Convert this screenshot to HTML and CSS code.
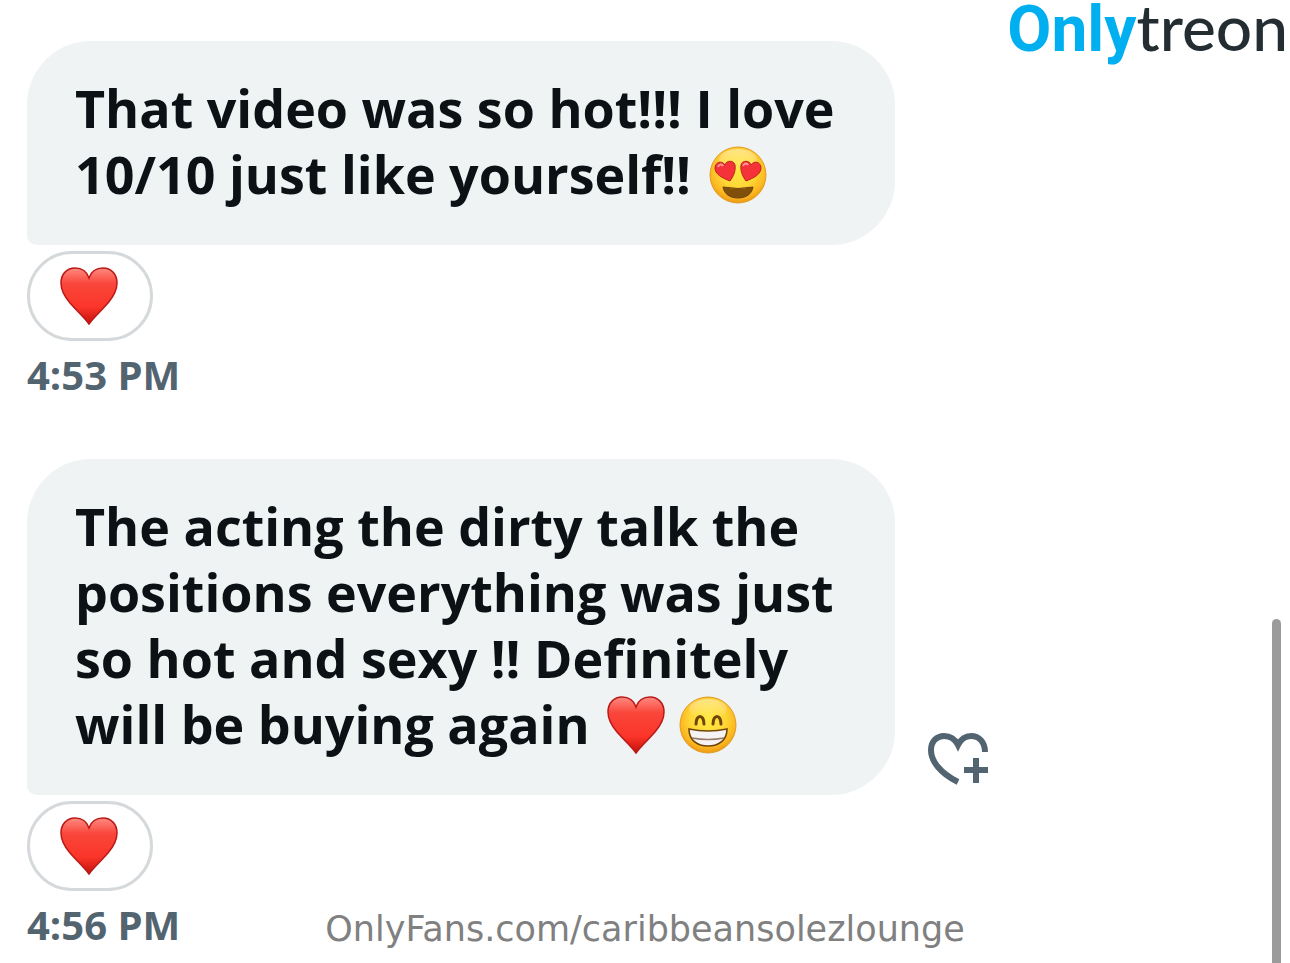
FILE: index.html
```html
<!DOCTYPE html>
<html lang="en">
<head>
    <meta charset="UTF-8">
    <meta name="viewport" content="width=device-width, initial-scale=1.0">
    <title>Messages</title>
    <link rel="stylesheet" href="styles.css">
</head>
<body>
    <svg class="defs" width="0" height="0" aria-hidden="true">
        <defs>
            <linearGradient id="heartFill" x1="0" y1="0" x2="0" y2="1">
                <stop offset="0" stop-color="#ff8a80"/>
                <stop offset="0.28" stop-color="#fa463b"/>
                <stop offset="0.7" stop-color="#fb3529"/>
                <stop offset="1" stop-color="#c4100c"/>
            </linearGradient>
            <radialGradient id="faceFill" cx="0.5" cy="0.4" r="0.62">
                <stop offset="0" stop-color="#ffe93f"/>
                <stop offset="0.5" stop-color="#ffd838"/>
                <stop offset="0.8" stop-color="#fcb821"/>
                <stop offset="1" stop-color="#e8930f"/>
            </radialGradient>
            <linearGradient id="shine" x1="0" y1="0" x2="0" y2="1">
                <stop offset="0" stop-color="#fff" stop-opacity="0.4"/>
                <stop offset="1" stop-color="#fff" stop-opacity="0"/>
            </linearGradient>
            <symbol id="heart" viewBox="0 0 58 58">
                <path d="M29 57C25 51 16 43 10 36C4 29 1 23 1 16C1 7 7 1 15 1C22 1 27 5 29 11C31 5 36 1 43 1C51 1 57 7 57 16C57 23 54 29 48 36C42 43 33 51 29 57Z" fill="url(#heartFill)" stroke="#b91a18" stroke-width="1.5"/>
            </symbol>
            <symbol id="heartEyes" viewBox="0 0 58 58">
                <circle cx="29" cy="29" r="28" fill="url(#faceFill)" stroke="#e39a25"/>
                <ellipse cx="29" cy="14" rx="19" ry="11" fill="url(#shine)"/>
                <path d="M21 35C13 32 6 28 6 22C6 16 13 14 16 19C17 14 25 14 26 19C27 25 24 31 21 35Z" fill="#f5323a" stroke="#ba2418"/>
                <path d="M37 35C45 32 52 28 52 22C52 16 45 14 42 19C41 14 33 14 32 19C31 25 34 31 37 35Z" fill="#f5323a" stroke="#ba2418"/>
                <path d="M9 21C10 18 13 18 14 20M34 20C35 17 38 17 39 19" fill="none" stroke="#ff9c98" stroke-width="2"/>
                <path d="M14 41Q29 44 44 41C43 48 37 52 29 52C21 52 15 48 14 41Z" fill="#80500b" stroke="#6e4108"/>
            </symbol>
            <symbol id="grin" viewBox="0 0 58 58">
                <circle cx="29" cy="29" r="28" fill="url(#faceFill)" stroke="#e39a25"/>
                <ellipse cx="29" cy="13" rx="19" ry="10" fill="url(#shine)"/>
                <path d="M17 28C17 18 25 18 25 28M34 28C34 18 42 18 42 28" fill="none" stroke="#714509" stroke-width="3" stroke-linecap="round"/>
                <path d="M10 33Q29 37 48 33C48 44 40 50 29 50C18 50 10 44 10 33Z" fill="#f5f3f3" stroke="#714509" stroke-width="1.6"/>
                <path d="M13 42Q29 45 45 42" fill="none" stroke="#987a68" stroke-width="1.6"/>
            </symbol>
        </defs>
    </svg>

    <header class="logo"><span class="logo-only">Only</span><span class="logo-treon">treon</span></header>

    <main class="chat">
        <article class="message">
            <div class="row">
                <p class="bubble">That video was so hot!!! I love<br>10/10 just like yourself!! <svg class="emoji" role="img" aria-label="Heart eyes"><use href="#heartEyes"/></svg></p>
            </div>
            <button class="reaction" type="button" aria-label="Heart reaction"><svg class="emoji"><use href="#heart"/></svg></button>
            <time class="time">4:53 PM</time>
        </article>

        <article class="message">
            <div class="row">
                <p class="bubble">The acting the dirty talk the<br>positions everything was just<br>so hot and sexy !! Definitely<br>will be buying again <svg class="emoji" role="img" aria-label="Heart"><use href="#heart"/></svg> <svg class="emoji" role="img" aria-label="Grin"><use href="#grin"/></svg></p>
                <button class="react" type="button" aria-label="Add reaction">
                    <svg width="62" height="54" viewBox="0 0 62 54" fill="none" stroke="#536471" stroke-width="6">
                        <path d="M31 50C13 41 4 29 4 18C4 9 10 4 17 4C24 4 28 7 31 13C34 7 38 4 44 4C52 4 58 10 58 20"/>
                        <path d="M49 26V51M37 38H61"/>
                    </svg>
                </button>
            </div>
            <button class="reaction" type="button" aria-label="Heart reaction"><svg class="emoji"><use href="#heart"/></svg></button>
            <time class="time">4:56 PM</time>
        </article>
    </main>

    <footer class="watermark">OnlyFans.com/caribbeansolezlounge</footer>
    <div class="scroll-thumb"></div>
</body>
</html>
```

FILE: styles.css
```css
* {
    box-sizing: border-box;
}
body {
    position: relative;
    min-height: 100vh;
    margin: 0;
    background: #fff;
    color: #0b1114;
    font-family: "Open Sans", "Noto Sans", sans-serif;
}
.defs {
    position: absolute;
}
button {
    padding: 0;
    border: none;
    background: none;
    cursor: pointer;
}
.logo {
    position: absolute;
    top: 0;
    right: 2px;
    line-height: 54px;
    white-space: nowrap;
}
.logo-only {
    color: #00aff0;
    font: 700 64px/54px Roboto, sans-serif;
}
.logo-treon {
    color: #232d32;
    font: 500 64px/54px Lato, sans-serif;
}
.chat {
    padding: 41px 27px 0;
}
.message {
    margin-bottom: 60px;
}
.message:last-child {
    margin-bottom: 0;
}
.row {
    display: flex;
    align-items: flex-end;
    gap: 32px;
}
.bubble {
    width: 100%;
    max-width: 868px;
    margin: 0;
    padding: 34px 48px 38px;
    border-radius: 64px 64px 64px 10px;
    background: #eff3f4;
    font-size: 52px;
    font-weight: 700;
    line-height: 66px;
}
.emoji {
    width: 58px;
    height: 58px;
    vertical-align: -10px;
}
.bubble .emoji:first-of-type {
    margin-left: 4px;
}
.react {
    display: flex;
    margin-bottom: 9px;
}
.reaction {
    display: flex;
    align-items: center;
    justify-content: center;
    width: 126px;
    height: 90px;
    margin-top: 6px;
    padding-right: 3px;
    border: 3px solid #d5d9db;
    border-radius: 45px;
    background: #fff;
}
.time {
    display: block;
    margin-top: 10px;
    color: #536471;
    font-size: 40px;
    font-weight: 700;
    line-height: 48px;
}
.watermark {
    position: absolute;
    bottom: 12px;
    left: 0;
    width: 100%;
    color: #808080;
    font: 35px/44px "DejaVu Sans", sans-serif;
    text-align: center;
}
.scroll-thumb {
    position: absolute;
    top: 619px;
    right: 9px;
    bottom: 0;
    width: 9px;
    border-radius: 5px 5px 0 0;
    background: #9b9b9b;
}
```
